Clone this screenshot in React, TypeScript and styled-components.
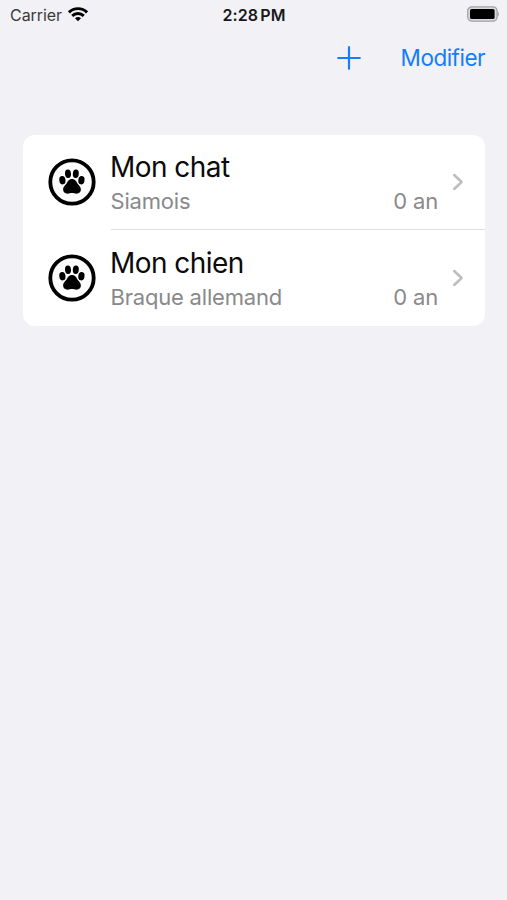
import { useState } from 'react';
import styled, { createGlobalStyle } from 'styled-components';

interface Animal {
  id: number;
  name: string;
  breed: string;
  age: number;
}

const GlobalStyle = createGlobalStyle`
  body {
    margin: 0;
    background-color: #f1f1f6;
    font-family: Inter, "Liberation Sans", sans-serif;
  }
`;

const Screen = styled.div`
  min-height: 100vh;
  display: flex;
  flex-direction: column;
`;

const StatusBar = styled.header`
  height: 29px;
  padding: 0 8px 0 10px;
  display: grid;
  grid-template-columns: 1fr auto 1fr;
  align-items: center;
  box-sizing: border-box;
  color: #18181a;
`;

const Carrier = styled.div`
  display: flex;
  align-items: center;
  gap: 6px;
  font-size: 16px;
  letter-spacing: -0.05px;
  color: #3a3a3d;
`;

const Clock = styled.div`
  margin-left: -1px;
  font-size: 16px;
  font-weight: 600;
  letter-spacing: 0.1px;
  word-spacing: -2px;
`;

const Battery = styled.div`
  justify-self: end;
  display: flex;
  margin-bottom: 1px;
`;

const Toolbar = styled.nav`
  height: 57px;
  padding-right: 22px;
  display: flex;
  align-items: center;
  justify-content: flex-end;
  gap: 40px;
`;

const ToolbarButton = styled.button`
  padding: 0;
  border: none;
  background: none;
  display: flex;
  font-family: inherit;
  font-size: 22.5px;
  line-height: 28px;
  letter-spacing: -0.5px;
  color: #147efb;
  cursor: pointer;
`;

const AnimalList = styled.ul`
  margin: 49px 22px 0 23px;
  padding: 0;
  list-style: none;
  border-radius: 12px;
  background-color: #fff;
  overflow: hidden;
`;

const AnimalRow = styled.li`
  display: flex;
  align-items: center;
  padding-left: 24.5px;

  svg {
    margin-bottom: 1px;
  }
`;

const RowContent = styled.div<{ $separator: boolean }>`
  flex: 1;
  height: ${props => (props.$separator ? '95px' : '96px')};
  margin-left: 15px;
  padding-right: 21px;
  box-sizing: border-box;
  display: flex;
  align-items: center;
  box-shadow: ${props => (props.$separator ? 'inset 0 -1px #dededf' : 'none')};
`;

const Labels = styled.div`
  flex: 1;
  margin-right: 14px;
  padding-top: 1px;
`;

const Name = styled.div`
  font-size: 28px;
  line-height: 36px;
  letter-spacing: -0.55px;
  margin-left: -0.5px;
  color: #0b0b0b;
`;

const Details = styled.div`
  display: flex;
  justify-content: space-between;
  font-size: 22px;
  line-height: 32px;
  letter-spacing: -0.2px;
  color: #89898b;
`;

function WifiIcon() {
  return (
    <svg width="20" height="15" viewBox="0 0 20 15" fill="none" stroke="#000" strokeWidth="2.9">
      <path d="M1 5.4 C6 .4 14 .4 19 5.4" />
      <path d="M4.2 8.9 C7.5 5.7 12.5 5.7 15.8 8.9" />
      <path d="M10 14.3 L7 11.3 C8.7 9.7 11.3 9.7 13 11.3 Z" fill="#000" stroke="none" />
    </svg>
  );
}

function BatteryIcon() {
  return (
    <svg width="32" height="16" viewBox="0 0 32 16">
      <rect x="0.7" y="0.8" width="29.4" height="14.4" rx="4.2" fill="#dadade" stroke="#a3a3a7" strokeWidth="1.3" />
      <rect x="3" y="3" width="24.6" height="10" rx="1.6" fill="#000" />
      <path d="M30.7 5.6 C32.3 6.4 32.3 9.6 30.7 10.4 Z" fill="#a3a3a7" />
    </svg>
  );
}

function PlusIcon() {
  return (
    <svg width="24" height="28" viewBox="0 0 24 28" stroke="#147efb" strokeWidth="2.2" strokeLinecap="round">
      <path d="M1.2 14 H22.8 M12 3.2 V24.8" />
    </svg>
  );
}

function PawIcon() {
  return (
    <svg width="48" height="48" viewBox="0 0 48 48">
      <circle cx="24" cy="24" r="21.7" fill="#fdfdfd" stroke="#000" strokeWidth="3.8" />
      <ellipse cx="14.4" cy="22.2" rx="3.1" ry="4.2" transform="rotate(-8 14.4 22.2)" />
      <ellipse cx="20" cy="15.8" rx="3" ry="4.3" transform="rotate(-4 20 15.8)" />
      <ellipse cx="27.8" cy="15.8" rx="3" ry="4.3" transform="rotate(4 27.8 15.8)" />
      <ellipse cx="33.4" cy="22.2" rx="3.1" ry="4.2" transform="rotate(8 33.4 22.2)" />
      <path d="M24 21 C26.8 21 28 22.8 29 24.8 C30 26.8 32.9 28.3 32.9 31.6 C32.9 34.2 31 35.7 28.7 35.7 C26.8 35.7 25.6 35.1 24 35.1 C22.4 35.1 21.2 35.7 19.3 35.7 C17 35.7 15.1 34.2 15.1 31.6 C15.1 28.3 18 26.8 19 24.8 C20 22.8 21.2 21 24 21 Z" />
    </svg>
  );
}

function ChevronIcon() {
  return (
    <svg width="12" height="18" viewBox="0 0 12 18" fill="none" stroke="#bdbdc0" strokeWidth="2.5" strokeLinecap="round" strokeLinejoin="round">
      <path d="M2.2 2 L9.6 9 L2.2 16" />
    </svg>
  );
}

export default function App() {
  const [animals, setAnimals] = useState<Animal[]>([
    { id: 1, name: 'Mon chat', breed: 'Siamois', age: 0 },
    { id: 2, name: 'Mon chien', breed: 'Braque allemand', age: 0 },
  ]);

  const handleAdd = () => {
    setAnimals([...animals, { id: animals.length + 1, name: 'Mon chat', breed: 'Siamois', age: 0 }]);
  };

  return (
    <Screen>
      <GlobalStyle />
      <StatusBar>
        <Carrier>
          Carrier
          <WifiIcon />
        </Carrier>
        <Clock>2:28 PM</Clock>
        <Battery>
          <BatteryIcon />
        </Battery>
      </StatusBar>
      <Toolbar>
        <ToolbarButton onClick={handleAdd}>
          <PlusIcon />
        </ToolbarButton>
        <ToolbarButton>Modifier</ToolbarButton>
      </Toolbar>
      <AnimalList>
        {animals.map((animal, index) => (
          <AnimalRow key={animal.id}>
            <PawIcon />
            <RowContent $separator={index < animals.length - 1}>
              <Labels>
                <Name>{animal.name}</Name>
                <Details>
                  <span>{animal.breed}</span>
                  <span>{animal.age} an</span>
                </Details>
              </Labels>
              <ChevronIcon />
            </RowContent>
          </AnimalRow>
        ))}
      </AnimalList>
    </Screen>
  );
}
